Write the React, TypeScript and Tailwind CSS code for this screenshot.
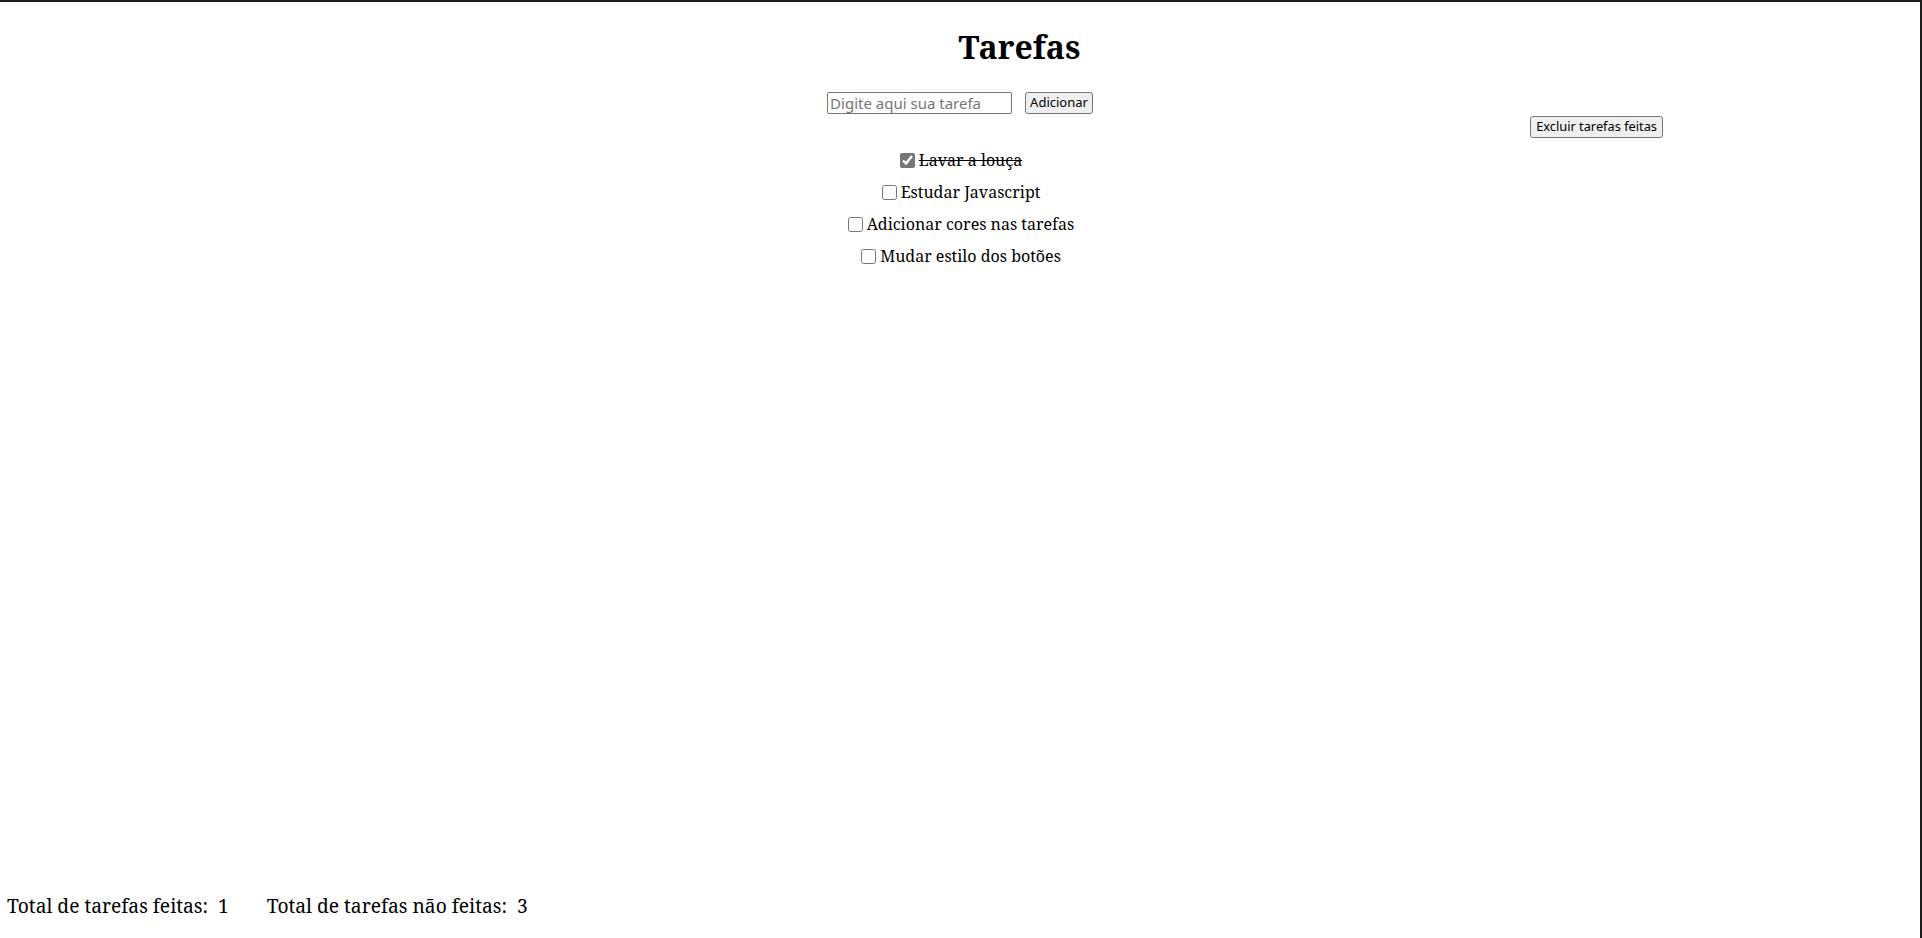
import { useState } from 'react'

type Task = { id: number; text: string; done: boolean }

const initialTasks: Task[] = [
  { id: 1, text: 'Lavar a louça', done: true },
  { id: 2, text: 'Estudar Javascript', done: false },
  { id: 3, text: 'Adicionar cores nas tarefas', done: false },
  { id: 4, text: 'Mudar estilo dos botões', done: false },
]

export default function App() {
  const [tasks, setTasks] = useState<Task[]>(initialTasks)
  const [draft, setDraft] = useState('')

  const done = tasks.filter((t) => t.done).length
  const pending = tasks.length - done

  const addTask = () => {
    if (!draft.trim()) return
    setTasks([...tasks, { id: Date.now(), text: draft.trim(), done: false }])
    setDraft('')
  }

  return (
    <div className="h-screen flex flex-col border-t-2 border-r-2 border-[#1c1c1c] bg-white text-black font-['Noto_Serif','DejaVu_Serif',serif]">
      {/* Header */}
      <div className="flex justify-center pl-[119px] mt-[21px] mb-[21px]">
        <h1 className="text-[32px] font-bold leading-normal">Tarefas</h1>
      </div>

      {/* Nova tarefa */}
      <div className="flex justify-center items-center gap-[13px] font-['Noto_Sans',sans-serif] text-[13px]">
        <input
          value={draft}
          onChange={(e) => setDraft(e.target.value)}
          placeholder="Digite aqui sua tarefa"
          className="w-[185px] h-[22px] px-[2px] text-[15px] border border-[#767676] rounded-[2px] placeholder:text-[#757575] outline-none"
        />
        <button
          onClick={addTask}
          className="h-[22px] px-[4px] border border-[#767676] rounded-[3px] bg-[#efefef]"
        >
          Adicionar
        </button>
      </div>

      <div className="flex justify-end pr-[257px] mt-[2px] font-['Noto_Sans',sans-serif] text-[12.8px]">
        <button
          onClick={() => setTasks(tasks.filter((t) => !t.done))}
          className="h-[22px] px-[5px] border border-[#767676] rounded-[3px] bg-[#efefef]"
        >
          Excluir tarefas feitas
        </button>
      </div>

      {/* Lista */}
      <ul className="flex flex-col items-center mt-[6px] text-[16px]">
        {tasks.map((t) => (
          <li key={t.id} className="h-[32px] flex items-center">
            <input
              type="checkbox"
              checked={t.done}
              onChange={() =>
                setTasks(tasks.map((x) => (x.id === t.id ? { ...x, done: !x.done } : x)))
              }
              className="w-[15px] h-[15px] ml-[2px] mr-[4px] accent-[#767676]"
            />
            <span className={t.done ? 'line-through' : ''}>{t.text}</span>
          </li>
        ))}
      </ul>

      {/* Totais */}
      <footer className="mt-auto mb-[17px] ml-[7px] flex gap-[38px] text-[19.2px]">
        <span>Total de tarefas feitas:&nbsp; {done}</span>
        <span>Total de tarefas não feitas:&nbsp; {pending}</span>
      </footer>
    </div>
  )
}
